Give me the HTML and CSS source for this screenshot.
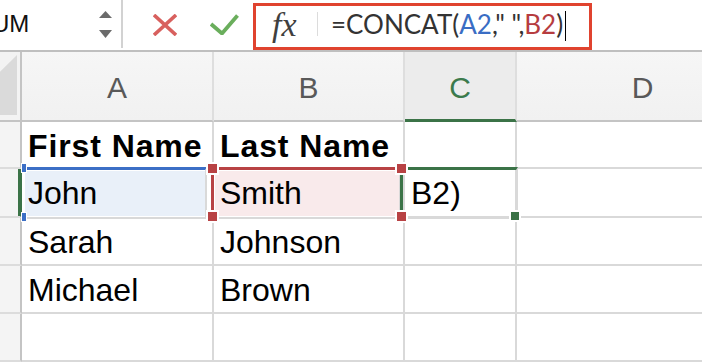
FILE: index.html
```html
<!DOCTYPE html>
<html lang="en">
<head>
    <meta charset="UTF-8">
    <meta name="viewport" content="width=device-width, initial-scale=1.0">
    <title>Concat formula</title>
    <link rel="stylesheet" href="styles.css">
</head>

<body>
    <div class="toolbar">
        <div class="namebox">
            <span class="name">UM</span>
            <svg class="spin" width="14" height="30" viewBox="0 0 14 30">
                <polygon points="0,7 6.5,0 13,7" fill="#6b6b6b"/>
                <polygon points="0,19 13,19 6.5,27" fill="#6b6b6b"/>
            </svg>
        </div>
        <svg class="icon-cancel" width="24" height="22" viewBox="0 0 24 22">
            <path d="M1 1 L23 21 M23 1 L1 21" stroke="#d8605e" stroke-width="3.6" fill="none"/>
        </svg>
        <svg class="icon-enter" width="29" height="21" viewBox="0 0 29 21">
            <path d="M1 10 L12 19.5 L27.5 1.5" stroke="#6aae5c" stroke-width="3.8" fill="none"/>
        </svg>
        <div class="formula">
            <span class="fx">fx</span>
            <span class="sep"></span>
            <span class="expr">=CONCAT(<span class="ref-a">A2</span>," ",<span class="ref-b">B2</span>)</span><span class="caret"></span>
        </div>
    </div>

    <div class="sheet">
        <div class="corner"><span class="select-all"></span></div>
        <div class="colhead">A</div>
        <div class="colhead">B</div>
        <div class="colhead active">C</div>
        <div class="colhead">D</div>

        <div class="rowhead"></div>
        <div class="cell bold"><span>First Name</span></div>
        <div class="cell bold"><span>Last Name</span></div>
        <div class="cell"></div>
        <div class="cell"></div>

        <div class="rowhead active"></div>
        <div class="cell"><span>John</span></div>
        <div class="cell"><span>Smith</span></div>
        <div class="cell"><span>B2)</span></div>
        <div class="cell"></div>

        <div class="rowhead"></div>
        <div class="cell"><span>Sarah</span></div>
        <div class="cell"><span>Johnson</span></div>
        <div class="cell"></div>
        <div class="cell"></div>

        <div class="rowhead"></div>
        <div class="cell"><span>Michael</span></div>
        <div class="cell"><span>Brown</span></div>
        <div class="cell"></div>
        <div class="cell"></div>

        <div class="rowhead"></div>
        <div class="cell"></div>
        <div class="cell"></div>
        <div class="cell"></div>
        <div class="cell"></div>

        <!-- reference highlights drawn over the grid -->
        <div class="range range-a"></div>
        <div class="range range-b"></div>
        <div class="range range-c"></div>
        <span class="handle blue hb-top"></span>
        <span class="handle blue hb-bottom"></span>
        <span class="handle red hr-tl"></span>
        <span class="handle red hr-bl"></span>
        <span class="handle red hr-tr"></span>
        <span class="handle red hr-br"></span>
        <span class="handle green hg"></span>
    </div>
</body>
</html>
```

FILE: styles.css
```css
body {
    font-family: 'Liberation Sans', Arial, sans-serif;
    margin: 0;
    padding: 0;
    width: 702px;
    height: 362px;
    overflow: hidden;
    background-color: #fff;
}

/* Top bar: name box, cancel/enter, formula */
.toolbar {
    display: flex;
    align-items: flex-start;
    height: 50px;
    border-bottom: 2px solid #bfbfbf;
    background-color: #fff;
}

.namebox {
    display: flex;
    align-items: center;
    width: 123px;
    height: 48px;
    box-sizing: border-box;
    border-right: 2px solid #d2d2d2;
    overflow: hidden;
}

.name {
    flex: 1;
    margin-left: -8px;
    font-size: 24px;
    color: #111;
}

.spin {
    margin-right: 8px;
    margin-top: 3px;
}

.icon-cancel {
    margin-left: 30px;
    margin-top: 14px;
}

.icon-enter {
    margin-left: 33px;
    margin-top: 14px;
}

.formula {
    display: flex;
    align-items: center;
    margin-left: 14px;
    margin-top: 3px;
    width: 339px;
    height: 47px;
    box-sizing: border-box;
    border: 3px solid #e0432f;
    padding-left: 16px;
    padding-bottom: 5px;
}

.fx {
    font-family: 'Liberation Serif', 'DejaVu Serif', serif;
    font-style: italic;
    font-size: 34px;
    color: #3f3f3f;
    width: 30px;
    margin-top: 2px;
}

.sep {
    width: 1px;
    height: 24px;
    margin-left: 15px;
    margin-right: 13px;
    background-color: #dcdcdc;
}

.expr {
    font-family: 'Lato', 'Liberation Sans', sans-serif;
    font-size: 26px;
    color: #333;
    white-space: pre;
}

.ref-a {
    color: #3a6dc4;
}

.ref-b {
    color: #b63c3f;
}

.caret {
    width: 1px;
    height: 30px;
    margin-left: 2px;
    margin-top: 4px;
    background-color: #000;
}

/* Grid */
.sheet {
    position: relative;
    display: grid;
    grid-template-columns: 22px 192px 191px 112px 185px;
    grid-template-rows: 70px 47px 49px 48px 48px 48px;
    overflow: hidden;
}

.sheet > div {
    box-sizing: border-box;
    border-right: 2px solid #d9d9d9;
    border-bottom: 2px solid #d9d9d9;
}

.corner {
    background-color: #f3f3f3;
    border-bottom-color: #c4c4c4 !important;
    border-right-color: #c4c4c4 !important;
    overflow: hidden;
}

.select-all {
    display: block;
    width: 17px;
    height: 60px;
    margin-top: 3px;
    background-color: #dadada;
    clip-path: polygon(100% 0, 100% 100%, 0 100%, 0 28%);
}

.colhead {
    display: flex;
    align-items: center;
    justify-content: center;
    padding-top: 4px;
    font-size: 30px;
    color: #595959;
    background: linear-gradient(#f6f6f6, #f1f1f1);
    border-bottom-color: #c4c4c4 !important;
    border-right-color: #dedede !important;
}

.colhead:last-child,
.colhead:nth-child(5) {
    padding-left: 66px;
    border-right: none !important;
}

.colhead.active {
    color: #3b7a4c;
    background: #ececec;
    border-bottom: 3px solid #3b7347 !important;
}

.rowhead {
    background-color: #f4f4f4;
    border-right-color: #c4c4c4 !important;
    border-bottom-color: #dcdcdc !important;
}

.rowhead.active {
    border-right-color: #3b7347 !important;
    box-shadow: inset -2px 0 #3b7347;
}

.cell {
    font-size: 32px;
    line-height: 46px;
    padding-top: 1px;
    padding-left: 6px;
    color: #000;
    white-space: nowrap;
    overflow: hidden;
}

.cell:nth-child(5n) {
    border-right: none !important;
}

/* keep cell values above the highlight fills */
.cell span {
    position: relative;
    z-index: 2;
}

.cell.bold {
    font-weight: 700;
    letter-spacing: 0.9px;
}

/* Formula reference highlights */
.range {
    position: absolute;
    top: 115px;
    height: 52px;
    box-sizing: border-box;
    z-index: 1;
}

.range-a {
    left: 25px;
    width: 182px;
    border-top: 3px solid #3c6fc6;
    border-bottom: 3px solid #3c6fc6;
    background-color: #e9f0f9;
    box-shadow: inset 0 1px #fff, inset 0 -1px #fff;
}

.range-b {
    left: 211px;
    width: 190px;
    border-top: 3px solid #b84244;
    border-bottom: 3px solid #b84244;
    border-left: 3px solid #b84244;
    background-color: #f9eaeb;
    box-shadow: inset 1px 1px #fff, inset 0 -1px #fff;
}

.range-c {
    left: 400px;
    width: 118px;
    border: 3px solid #3b7347;
}

.handle {
    position: absolute;
    z-index: 3;
    width: 9px;
    height: 9px;
    box-shadow: 0 0 0 2px #fff;
}

.handle.blue {
    left: 22px;
    width: 4px;
    height: 8px;
    background-color: #3c6fc6;
    box-shadow: 0 0 0 1px #fff;
}

.hb-top {
    top: 112px;
}

.hb-bottom {
    top: 161px;
}

.handle.red {
    background-color: #b84244;
}

.hr-tl {
    left: 208px;
    top: 112px;
}

.hr-bl {
    left: 208px;
    top: 160px;
}

.hr-tr {
    left: 397px;
    top: 112px;
}

.hr-br {
    left: 397px;
    top: 160px;
}

.handle.green {
    left: 511px;
    top: 160px;
    width: 8px;
    height: 8px;
    background-color: #3b7347;
}
```
